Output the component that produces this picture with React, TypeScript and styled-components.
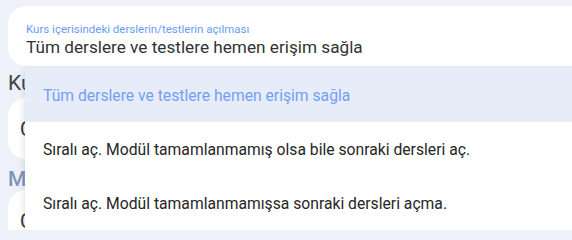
import React from 'react';
import styled, { createGlobalStyle } from 'styled-components';

const GlobalStyle = createGlobalStyle`
  html, body {
    margin: 0;
    padding: 0;
    background: #eef1f9;
    font-family: Roboto, "Noto Sans", sans-serif;
    overflow: hidden;
  }
`;

const Page = styled.div`
  position: relative;
  width: 572px;
  height: 230px;
  padding: 6px 0 0 8px;
  box-sizing: border-box;
  overflow: hidden;
`;

const Field = styled.div`
  background: #ffffff;
  border-radius: 18px;
  height: 60px;
  width: 600px;
  padding: 17px 18px 0;
  box-sizing: border-box;
  display: flex;
  flex-direction: column;
`;

const FieldLabel = styled.span`
  font-size: 11.5px;
  line-height: 13px;
  color: #6a9cf3;
`;

const FieldValue = styled.span`
  font-size: 17.2px;
  line-height: 22px;
  color: #333333;
`;

const SectionTitle = styled.div<{ $muted?: boolean }>`
  font-size: 21px;
  line-height: 22px;
  margin: ${(p) => (p.$muted ? '9px 0 0' : '6px 0 4px')};
  color: ${(p) => (p.$muted ? '#7e93b8' : '#444444')};
  font-weight: ${(p) => (p.$muted ? 500 : 400)};
`;

const Card = styled.div`
  background: #ffffff;
  border-radius: 18px;
  height: 61px;
  width: 600px;
  padding: 0 12px;
  box-sizing: border-box;
  display: flex;
  align-items: center;
  font-size: 20px;
  color: #333;
`;

const Menu = styled.ul`
  position: absolute;
  left: 25px;
  top: 68px;
  width: 600px;
  margin: 0;
  padding: 0;
  list-style: none;
  background: #ffffff;
  box-shadow: 0 2px 8px rgba(40, 60, 100, 0.18);
`;

const MenuItem = styled.li<{ $active?: boolean }>`
  height: 54px;
  display: flex;
  align-items: center;
  padding-left: 18px;
  font-size: 15.7px;
  color: ${(p) => (p.$active ? '#74a0f4' : '#262626')};
  background: ${(p) => (p.$active ? '#e6edf9' : '#ffffff')};
`;

const options = [
  'Tüm derslere ve testlere hemen erişim sağla',
  'Sıralı aç. Modül tamamlanmamış olsa bile sonraki dersleri aç.',
  'Sıralı aç. Modül tamamlanmamışsa sonraki dersleri açma.',
];

export default function App() {
  return (
    <>
      <GlobalStyle />
      <Page>
        <Field>
          <FieldLabel>Kurs içerisindeki derslerin/testlerin açılması</FieldLabel>
          <FieldValue>{options[0]}</FieldValue>
        </Field>
        <SectionTitle>Kurs</SectionTitle>
        <Card>C</Card>
        <SectionTitle $muted>M</SectionTitle>
        <Card>C</Card>
        <Menu>
          {options.map((o, i) => (
            <MenuItem key={o} $active={i === 0}>
              {o}
            </MenuItem>
          ))}
        </Menu>
      </Page>
    </>
  );
}
